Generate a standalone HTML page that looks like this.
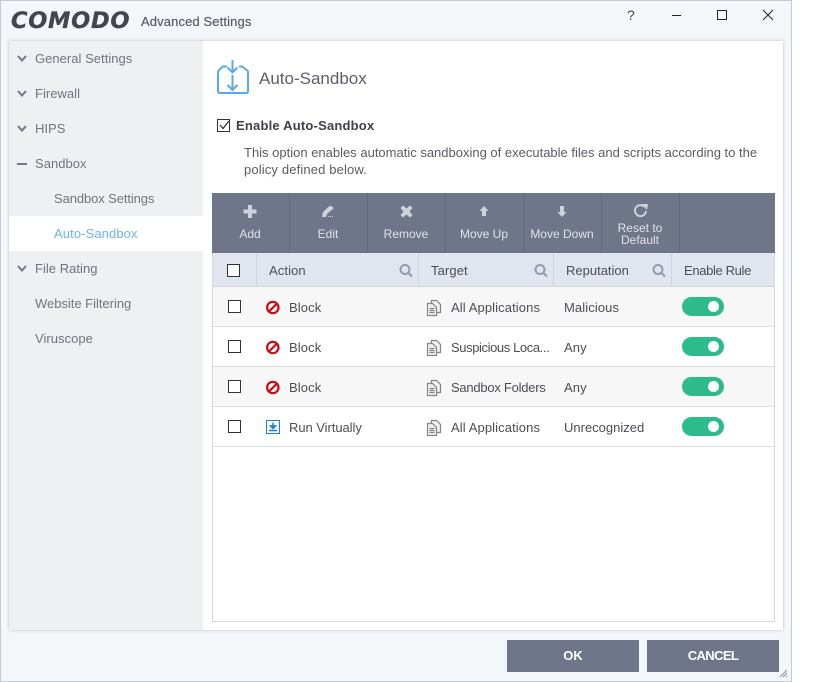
<!DOCTYPE html>
<html><head><meta charset="utf-8">
<style>
html,body{margin:0;padding:0;background:#fff}
body{width:819px;height:682px;position:relative;overflow:hidden;font-family:"Liberation Sans",sans-serif;font-size:13px;color:#555}
.a{position:absolute}
.t{position:absolute;white-space:nowrap;line-height:18px;height:18px;transform:translateY(-8px)}
.n{color:#73737d;letter-spacing:.03px}
.b{color:#4d4d55;letter-spacing:.1px}
.w{color:#dfe2e8;text-align:center;font-size:12px;width:78px}
.cb{position:absolute;width:11px;height:11px;border:1px solid #333;background:#fff}
.sw{position:absolute;left:682px;width:42px;height:19px;border-radius:10px;background:#2dbb8c}
.sw i{position:absolute;left:26px;top:4px;width:11px;height:11px;border-radius:50%;background:#fff}
svg{position:absolute;overflow:visible;z-index:5}
</style></head><body>
<div class="a" style="left:0;top:0;width:790px;height:680px;border:1px solid #c3ccd6;background:#f3f7fa"></div>
<div class="a" style="left:9px;top:41px;width:774px;height:589px;background:#fff;box-shadow:0 0 3px #b9bec6"></div>
<div class="a" style="left:9px;top:41px;width:194px;height:589px;background:#eff0f2"></div>
<div class="a" style="left:9px;top:216px;width:194px;height:35px;background:#fff"></div>

<div class="t" style="left:11px;top:20px;font-family:'DejaVu Sans',sans-serif;font-size:22.5px;font-weight:bold;font-style:italic;color:#45454f;letter-spacing:.7px;-webkit-text-stroke:.3px #45454f">COMODO</div>
<div class="t b" style="left:141px;top:21px;font-size:13px;color:#5c5c66;letter-spacing:.12px;-webkit-text-stroke:.2px #5c5c66">Advanced Settings</div>

<div class="t" style="left:627px;top:14px;font-size:14px;color:#444">?</div>
<svg style="left:0;top:0" width="819" height="682" fill="none" stroke="#222" stroke-width="1">
<path d="M672 15.500H681"/><path d="M717.500 10.500H726.500V19.500H717.500Z"/><path d="M763 10L773 20M773 10L763 20"/>
<path d="M780 677L787 670M783 677L787 673M786 677L787 676" stroke="#8a8f98"/>
<g stroke="#6d7a8a" stroke-width="2">
<path d="M18 56L22 60.500L26 56"/><path d="M18 91L22 95.500L26 91"/><path d="M18 126L22 130.500L26 126"/><path d="M17 164H27"/><path d="M18 266L22 270.500L26 266"/>
</g>
<!-- title icon -->
<g stroke="#58a8ea" stroke-width="2">
<path d="M218 71V91Q218 93 220 93H246Q248 93 248 91V71"/>
<path d="M218 71L223 66.500H227M239 66.500H242L248 71"/>
<path d="M232.500 60V72M227.500 67.500L232.500 72.500L237.500 67.500"/>
<path d="M232.500 75V90M227.500 85L232.500 90L237.500 85"/>
</g>
<!-- toolbar icons -->
<g stroke="none" fill="#cfd2da">
<path d="M248 205H252V209.500H256.500V213.500H252V218H248V213.500H243.500V209.500H248Z"/>
<path d="M322 217L323 212L330 205.500L334 208L327 214L326 217Z"/><rect x="328" y="216" width="1" height="1"/><rect x="330" y="216" width="1" height="1"/><rect x="332" y="216" width="1" height="1"/>
<path d="M403 205.500L406.500 208.500L410 205.500L412.500 208L409.500 211.500L412.500 215L410 217.500L406.500 214.500L403 217.500L400.500 215L403.500 211.500L400.500 208Z"/>
<path d="M484 206L488.500 211H486V216H482V211H479.500Z"/>
<path d="M560 206H564V212H566.500L562 217L557.500 212H560Z"/>
</g>
<path d="M644.500 206.800A5.500 5.500 0 1 0 646 211" stroke="#cfd2da" stroke-width="2"/>
<path d="M642 204L648 204L647 210Z" fill="#cfd2da" stroke="none"/>
<!-- search -->
<g stroke="#8f9db0" stroke-width="2">
<circle cx="405" cy="269.500" r="4.500"/><path d="M408.500 273L412 276.500"/>
<circle cx="540" cy="269.500" r="4.500"/><path d="M543.500 273L547 276.500"/>
<circle cx="658" cy="269.500" r="4.500"/><path d="M661.500 273L665 276.500"/>
</g>
</svg>

<div class="t n" style="left:35px;top:58px">General Settings</div>
<div class="t n" style="left:35px;top:93px">Firewall</div>
<div class="t n" style="left:35px;top:128px">HIPS</div>
<div class="t n" style="left:35px;top:163px">Sandbox</div>
<div class="t n" style="left:54px;top:198px;letter-spacing:-.1px">Sandbox Settings</div>
<div class="t" style="left:54px;top:233px;color:#6fb1ee;letter-spacing:.1px">Auto-Sandbox</div>
<div class="t n" style="left:35px;top:268px">File Rating</div>
<div class="t n" style="left:35px;top:303px;letter-spacing:-.02px">Website Filtering</div>
<div class="t n" style="left:35px;top:338px">Viruscope</div>

<div class="t" style="left:259px;top:78px;font-size:17px;color:#5e5e68">Auto-Sandbox</div>
<div class="cb" style="left:217px;top:119px"></div>
<svg style="left:0;top:0" width="819" height="682" fill="none"><path d="M220 125L223 128.500L229 121" stroke="#333" stroke-width="1.300"/></svg>
<div class="t" style="left:236px;top:125px;font-weight:bold;color:#3f3f48;letter-spacing:.2px">Enable Auto-Sandbox</div>
<div class="t" style="left:244px;top:152px;color:#5b5b65">This option enables automatic sandboxing of executable files and scripts according to the</div>
<div class="t" style="left:244px;top:169px;color:#5b5b65;letter-spacing:.14px">policy defined below.</div>

<!-- table -->
<div class="a" style="left:212px;top:193px;width:561px;height:427px;border:1px solid #d5d6d8;background:#fff"></div>
<div class="a" style="left:212px;top:193px;width:563px;height:60px;background:#70768a"></div>
<div class="a" style="left:289px;top:193px;width:1px;height:60px;background:#636a7d"></div>
<div class="a" style="left:367px;top:193px;width:1px;height:60px;background:#636a7d"></div>
<div class="a" style="left:445px;top:193px;width:1px;height:60px;background:#636a7d"></div>
<div class="a" style="left:523px;top:193px;width:1px;height:60px;background:#636a7d"></div>
<div class="a" style="left:601px;top:193px;width:1px;height:60px;background:#636a7d"></div>
<div class="a" style="left:679px;top:193px;width:1px;height:60px;background:#636a7d"></div>
<div class="t w" style="left:211px;top:233px">Add</div>
<div class="t w" style="left:289px;top:233px">Edit</div>
<div class="t w" style="left:367px;top:233px">Remove</div>
<div class="t w" style="left:445px;top:233px">Move Up</div>
<div class="t w" style="left:523px;top:233px">Move Down</div>
<div class="t w" style="left:601px;top:227px">Reset to</div>
<div class="t w" style="left:601px;top:239px">Default</div>

<div class="a" style="left:213px;top:253px;width:561px;height:33px;background:#e1e5ef;border-bottom:1px solid #d3d4d8"></div>
<div class="a" style="left:256px;top:253px;width:1px;height:33px;background:#d0d4dc"></div>
<div class="a" style="left:418px;top:253px;width:1px;height:33px;background:#d0d4dc"></div>
<div class="a" style="left:553px;top:253px;width:1px;height:33px;background:#d0d4dc"></div>
<div class="a" style="left:671px;top:253px;width:1px;height:33px;background:#d0d4dc"></div>
<div class="cb" style="left:227px;top:264px"></div>
<div class="t b" style="left:269px;top:270px">Action</div>
<div class="t b" style="left:431px;top:270px">Target</div>
<div class="t b" style="left:566px;top:270px;letter-spacing:0">Reputation</div>
<div class="t b" style="left:684px;top:270px;letter-spacing:-.35px">Enable Rule</div>

<div class="a" style="left:213px;top:287px;width:561px;height:39px;background:#f7f7f7;border-bottom:1px solid #dedede"></div>
<div class="a" style="left:213px;top:327px;width:561px;height:39px;background:#fff;border-bottom:1px solid #dedede"></div>
<div class="a" style="left:213px;top:367px;width:561px;height:39px;background:#f7f7f7;border-bottom:1px solid #dedede"></div>
<div class="a" style="left:213px;top:407px;width:561px;height:39px;background:#fff;border-bottom:1px solid #dedede"></div>

<div class="cb" style="left:228px;top:300px"></div>
<div class="cb" style="left:228px;top:340px"></div>
<div class="cb" style="left:228px;top:380px"></div>
<div class="cb" style="left:228px;top:420px"></div>

<svg style="left:0;top:0" width="819" height="682" fill="none">
<g stroke="#cc0a12" stroke-width="2.200">
<circle cx="272.800" cy="307.500" r="5.700"/><path d="M269 311.500L277 303.500"/>
<circle cx="272.800" cy="347.500" r="5.700"/><path d="M269 351.500L277 343.500"/>
<circle cx="272.800" cy="387.500" r="5.700"/><path d="M269 391.500L277 383.500"/>
</g>
<path d="M266.500 420.500H279.500V433.500H266.500Z" stroke="#1a7fdc"/>
<path d="M273 422.500V427M270.500 426L273 428.500L275.500 426Z" stroke="#1a7fdc" fill="#1a7fdc" stroke-width="1.500"/>
<path d="M269 430.500H277" stroke="#1a7fdc" stroke-width="1.500"/>
<g stroke="#85858a" stroke-width="1.200" fill="#f2f2f2">
<path d="M431.500 300.500H436.500L440.500 304.500V312.500H431.500Z"/>
<path d="M427.500 303.500H432.500L436.500 307.500V315.500H427.500Z"/><path d="M429.500 308.500H434.500M429.500 310.500H434.500M429.500 312.500H434.500"/>
<path d="M431.500 340.500H436.500L440.500 344.500V352.500H431.500Z"/>
<path d="M427.500 343.500H432.500L436.500 347.500V355.500H427.500Z"/><path d="M429.500 348.500H434.500M429.500 350.500H434.500M429.500 352.500H434.500"/>
<path d="M431.500 380.500H436.500L440.500 384.500V392.500H431.500Z"/>
<path d="M427.500 383.500H432.500L436.500 387.500V395.500H427.500Z"/><path d="M429.500 388.500H434.500M429.500 390.500H434.500M429.500 392.500H434.500"/>
<path d="M431.500 420.500H436.500L440.500 424.500V432.500H431.500Z"/>
<path d="M427.500 423.500H432.500L436.500 427.500V435.500H427.500Z"/><path d="M429.500 428.500H434.500M429.500 430.500H434.500M429.500 432.500H434.500"/>
</g>
</svg>

<div class="t b" style="left:289px;top:307px">Block</div>
<div class="t b" style="left:289px;top:347px">Block</div>
<div class="t b" style="left:289px;top:387px">Block</div>
<div class="t b" style="left:289px;top:427px;letter-spacing:-.05px">Run Virtually</div>
<div class="t b" style="left:451px;top:307px">All Applications</div>
<div class="t b" style="left:451px;top:347px;letter-spacing:-.4px">Suspicious Loca...</div>
<div class="t b" style="left:451px;top:387px;letter-spacing:-.25px">Sandbox Folders</div>
<div class="t b" style="left:451px;top:427px">All Applications</div>
<div class="t b" style="left:564px;top:307px">Malicious</div>
<div class="t b" style="left:564px;top:347px">Any</div>
<div class="t b" style="left:564px;top:387px">Any</div>
<div class="t b" style="left:564px;top:427px;letter-spacing:0">Unrecognized</div>
<div class="sw" style="top:297px"><i></i></div>
<div class="sw" style="top:337px"><i></i></div>
<div class="sw" style="top:377px"><i></i></div>
<div class="sw" style="top:417px"><i></i></div>

<div class="a" style="left:507px;top:640px;width:132px;height:32px;background:#70768a;color:#fff;font-weight:bold;font-size:13px;line-height:32px;text-align:center">OK</div>
<div class="a" style="left:647px;top:640px;width:132px;height:32px;background:#70768a;color:#fff;font-weight:bold;font-size:13px;line-height:32px;text-align:center;letter-spacing:-.6px">CANCEL</div>
</body></html>
